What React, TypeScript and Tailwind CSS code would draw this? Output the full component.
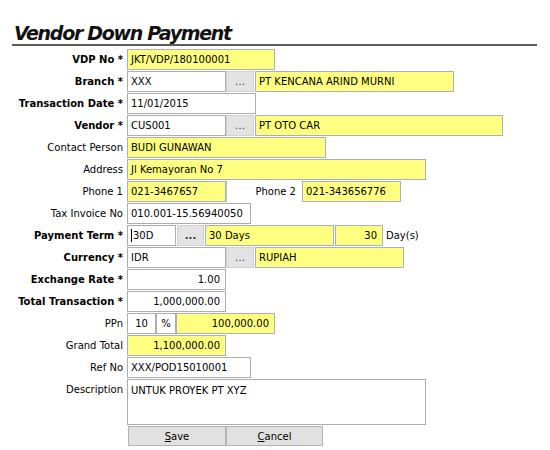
import React from 'react';

const font = "font-['DejaVu_Sans',Verdana,sans-serif]";

type BoxProps = {
    width: string;
    yellow?: boolean;
    right?: boolean;
    center?: boolean;
    className?: string;
    children?: React.ReactNode;
};

// one field, drawn as a plain box so that the text sits exactly like the form
const Box: React.FC<BoxProps> = ({ width, yellow, right, center, className, children }) => (
    <div
        className={[
            width,
            'h-full shrink-0 border flex items-center whitespace-nowrap overflow-hidden',
            yellow ? 'bg-[#ffff80] border-[#a8aec6]' : 'bg-white border-[#adadad]',
            right ? 'justify-end pr-[5px]' : center ? 'justify-center' : 'pl-[3px]',
            className || '',
        ].join(' ')}
    >
        {children}
    </div>
);

const Lookup: React.FC<{ bold?: boolean }> = ({ bold }) => (
    <div
        className={`h-full shrink-0 ${bold ? 'w-[27px] font-bold' : 'w-[28px]'} bg-[#e3e3e3] border border-[#d2d2d2] flex items-center justify-center text-[#333]`}
    >
        {bold ? '...' : '…'}
    </div>
);

const Row: React.FC<{ label: string; required?: boolean; tall?: boolean; children: React.ReactNode }> = ({
    label,
    required,
    tall,
    children,
}) => (
    <div className={`flex ${tall ? 'h-[46px]' : 'h-[21px]'} mb-[1px]`}>
        <div
            className={`w-[123px] shrink-0 text-right whitespace-nowrap ${tall ? 'pt-[2px] leading-[18px]' : 'leading-[21px]'} ${required ? 'font-bold' : ''}`}
        >
            {label}
            {required ? ' *' : ''}
        </div>
        <div className="ml-[4px] flex h-full">{children}</div>
    </div>
);

const App: React.FC = () => {
    return (
        <div className={`w-[550px] h-[450px] bg-white text-black text-[10px] ${font}`}>
            {/* Header */}
            <div className="pt-[22px] pl-[14px] h-[44px] text-[19px] leading-[22px] font-bold italic tracking-[-1.3px] text-[#111]">
                Vendor Down Payment
            </div>
            <div className="ml-[12px] w-[525px] h-[2px] bg-[#5c5c5c]" />

            {/* Form */}
            <div className="mt-[3px]">
                <Row label="VDP No" required>
                    <Box width="w-[148px]" yellow>JKT/VDP/180100001</Box>
                </Row>
                <Row label="Branch" required>
                    <Box width="w-[99px]">XXX</Box>
                    <Lookup />
                    <Box width="w-[199px]" yellow className="ml-[1px]">PT KENCANA ARIND MURNI</Box>
                </Row>
                <Row label="Transaction Date" required>
                    <Box width="w-[129px]">11/01/2015</Box>
                </Row>
                <Row label="Vendor" required>
                    <Box width="w-[99px]">CUS001</Box>
                    <Lookup />
                    <Box width="w-[248px]" yellow className="ml-[1px]">PT OTO CAR</Box>
                </Row>
                <Row label="Contact Person">
                    <Box width="w-[199px]" yellow>BUDI GUNAWAN</Box>
                </Row>
                <Row label="Address">
                    <Box width="w-[299px]" yellow>Jl Kemayoran No 7</Box>
                </Row>
                <Row label="Phone 1">
                    <Box width="w-[99px]" yellow>021-3467657</Box>
                    <div className="w-[76px] h-full shrink-0 border-l border-[#c4c4c4] text-right pr-[6px] leading-[21px]">
                        Phone 2
                    </div>
                    <Box width="w-[99px]" yellow>021-343656776</Box>
                </Row>
                <Row label="Tax Invoice No">
                    <Box width="w-[124px]">010.001-15.56940050</Box>
                </Row>
                <Row label="Payment Term" required>
                    <Box width="w-[49px]">
                        <span className="w-px h-[13px] bg-black mr-px" />
                        30D
                    </Box>
                    <div className="ml-[1px] h-full flex">
                        <Lookup bold />
                    </div>
                    <Box width="w-[129px]" yellow className="ml-[1px]">30 Days</Box>
                    <Box width="w-[48px]" yellow right className="ml-[1px]">30</Box>
                    <div className="ml-[3px] leading-[21px]">Day(s)</div>
                </Row>
                <Row label="Currency" required>
                    <Box width="w-[99px]">IDR</Box>
                    <Lookup />
                    <Box width="w-[149px]" yellow className="ml-[1px]">RUPIAH</Box>
                </Row>
                <Row label="Exchange Rate" required>
                    <Box width="w-[99px]" right>1.00</Box>
                </Row>
                <Row label="Total Transaction" required>
                    <Box width="w-[99px]" right>1,000,000.00</Box>
                </Row>
                <Row label="PPn">
                    <Box width="w-[29px]" center>10</Box>
                    <Box width="w-[20px]" center>%</Box>
                    <Box width="w-[99px]" yellow right>100,000.00</Box>
                </Row>
                <Row label="Grand Total">
                    <Box width="w-[99px]" yellow right>1,100,000.00</Box>
                </Row>
                <Row label="Ref No">
                    <Box width="w-[124px]">XXX/POD15010001</Box>
                </Row>
                <Row label="Description" tall>
                    <div className="w-[299px] h-full border border-[#adadad] bg-white pl-[3px] pt-[2px] leading-[18px]">
                        UNTUK PROYEK PT XYZ
                    </div>
                </Row>

                {/* Buttons */}
                <div className="flex pl-[128px] h-[20px]">
                    <button className="w-[98px] h-full bg-[#e1e1e1] border border-[#b4b4b4] text-black">
                        <span className="underline">S</span>ave
                    </button>
                    <button className="w-[97px] h-full bg-[#e1e1e1] border border-[#b4b4b4] text-black">
                        <span className="underline">C</span>ancel
                    </button>
                </div>
            </div>
        </div>
    );
};

export default App;
